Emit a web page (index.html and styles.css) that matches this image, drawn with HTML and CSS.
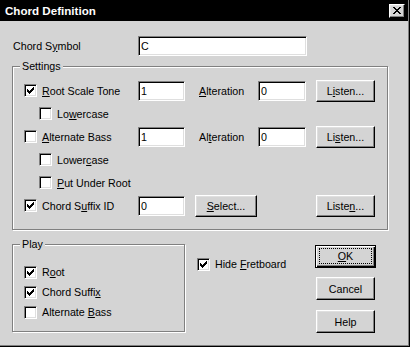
FILE: index.html
```html
<!DOCTYPE html>
<html>
<head>
<meta charset="utf-8">
<link rel="stylesheet" href="styles.css">
</head>
<body>
<div class="window">
  <div class="titlebar">
    <span class="title">Chord Definition</span>
    <span class="close"><svg width="8" height="7" viewBox="0 0 8 7" shape-rendering="crispEdges"><path d="M0 0h2v1H0zM6 0h2v1H6zM1 1h2v1H1zM5 1h2v1H5zM2 2h4v1H2zM3 3h2v1H3zM2 4h4v1H2zM1 5h2v1H1zM5 5h2v1H5zM0 6h2v1H0zM6 6h2v1H6z"/></svg></span>
  </div>
  <div class="content">
    <div class="symbol-row">
      <span class="sym-lbl">Chord S<u>y</u>mbol</span>
      <span class="edit wide">C</span>
    </div>

    <div class="group settings">
      <span class="legend">Settings</span>
      <div class="grid">
        <label class="cb"><span class="box"><svg class="ck" width="11" height="11" viewBox="1 1 11 11" shape-rendering="crispEdges"><path d="M3 5h1v3H3zM4 6h1v3H4zM5 7h1v3H5zM6 6h1v3H6zM7 5h1v3H7zM8 4h1v3H8zM9 3h1v3H9z"/></svg></span><span><u>R</u>oot Scale Tone</span></label>
        <span class="edit">1</span>
        <span class="alt"><u>A</u>lteration</span>
        <span class="edit">0</span>
        <span class="btn listen">L<u>i</u>sten...</span>

        <label class="cb sub"><span class="box"></span><span>Lo<u>w</u>ercase</span></label>

        <label class="cb"><span class="box"></span><span><u>A</u>lternate Bass</span></label>
        <span class="edit">1</span>
        <span class="alt">Al<u>t</u>eration</span>
        <span class="edit">0</span>
        <span class="btn listen">Li<u>s</u>ten...</span>

        <label class="cb sub"><span class="box"></span><span>Lower<u>c</u>ase</span></label>

        <label class="cb sub"><span class="box"></span><span><u>P</u>ut Under Root</span></label>

        <label class="cb"><span class="box"><svg class="ck" width="11" height="11" viewBox="1 1 11 11" shape-rendering="crispEdges"><path d="M3 5h1v3H3zM4 6h1v3H4zM5 7h1v3H5zM6 6h1v3H6zM7 5h1v3H7zM8 4h1v3H8zM9 3h1v3H9z"/></svg></span><span>Chord S<u>u</u>ffix ID</span></label>
        <span class="edit">0</span>
        <span class="btn select"><u>S</u>elect...</span>
        <span class="btn listen c5">Liste<u>n</u>...</span>
      </div>
    </div>

    <div class="bottom">
      <div class="group play">
        <span class="legend">Play</span>
        <label class="cb prow"><span class="box"><svg class="ck" width="11" height="11" viewBox="1 1 11 11" shape-rendering="crispEdges"><path d="M3 5h1v3H3zM4 6h1v3H4zM5 7h1v3H5zM6 6h1v3H6zM7 5h1v3H7zM8 4h1v3H8zM9 3h1v3H9z"/></svg></span><span>R<u>o</u>ot</span></label>
        <label class="cb prow"><span class="box"><svg class="ck" width="11" height="11" viewBox="1 1 11 11" shape-rendering="crispEdges"><path d="M3 5h1v3H3zM4 6h1v3H4zM5 7h1v3H5zM6 6h1v3H6zM7 5h1v3H7zM8 4h1v3H8zM9 3h1v3H9z"/></svg></span><span>Chord Suffi<u>x</u></span></label>
        <label class="cb prow"><span class="box"></span><span>Alternate <u>B</u>ass</span></label>
      </div>
      <div class="mid">
        <label class="cb prow"><span class="box"><svg class="ck" width="11" height="11" viewBox="1 1 11 11" shape-rendering="crispEdges"><path d="M3 5h1v3H3zM4 6h1v3H4zM5 7h1v3H5zM6 6h1v3H6zM7 5h1v3H7zM8 4h1v3H8zM9 3h1v3H9z"/></svg></span><span>Hide <u>F</u>retboard</span></label>
      </div>
      <div class="buttons">
        <span class="btn default"><span class="focus"><u>O</u>K</span></span>
        <span class="btn dlg cancel">Cancel</span>
        <span class="btn dlg help">Help</span>
      </div>
    </div>
  </div>
</div>
</body>
</html>
```

FILE: styles.css
```css
* { box-sizing: border-box; }
html, body { margin: 0; padding: 0; }
body {
  background: #d4d4d4;
  font-family: "Liberation Sans", Arial, sans-serif;
  font-size: 10.7px;
  color: #000;
}
u { text-underline-offset: 1px; }

.window {
  width: 410px;
  height: 347px;
  background: #d4d4d4;
  border-right: 1px solid #000;
  border-bottom: 1px solid #000;
  box-shadow: inset -1px -1px 0 #808080;
  overflow: hidden;
}

.titlebar {
  height: 21px;
  margin-right: 1px;
  background: #000;
  display: flex;
  align-items: center;
  justify-content: space-between;
  padding: 0 3px 0 5px;
}
.title {
  color: #fff;
  font-weight: bold;
  font-size: 11.6px;
}
.close {
  width: 16px;
  height: 14px;
  background: #d4d4d4;
  border: 1px solid;
  border-color: #fff #000 #000 #fff;
  box-shadow: inset -1px -1px 0 #808080, inset 1px 1px 0 #dfdfdf;
  display: flex;
  align-items: center;
  justify-content: center;
}

.content { padding: 15px 0 0 12px; }

.symbol-row { display: flex; align-items: center; height: 20px; }
.sym-lbl { width: 126px; padding-left: 1px; }

.edit {
  height: 20px;
  background: #fff;
  border: 1px solid;
  border-color: #808080 #fff #fff #808080;
  box-shadow: inset 1px 1px 0 #000, inset -1px -1px 0 #dfdfdf;
  padding-left: 2px;
  display: flex;
  align-items: center;
}
.edit.wide { width: 169px; }

.group {
  position: relative;
  border: 1px solid #808080;
  box-shadow: inset 1px 1px 0 #fff, 1px 1px 0 #fff;
}
.legend {
  position: absolute;
  top: -7px;
  left: 7px;
  padding: 0 2px;
  line-height: 13px;
  background: #d4d4d4;
}

.settings {
  margin-top: 10px;
  width: 376px;
  height: 164px;
  padding: 12px 0 0 11px;
}
.grid {
  display: grid;
  grid-template-columns: 114px 47px 73px 48px 69px;
  grid-auto-rows: 23px;
  align-items: center;
}
.sub { grid-column: 1 / -1; padding-left: 15px; }
.c5 { grid-column: 5; }
.alt { padding-left: 14px; }

.cb { display: flex; align-items: center; gap: 5px; }
.box {
  width: 13px;
  height: 13px;
  flex: none;
  background: #fff;
  border: 1px solid;
  border-color: #808080 #fff #fff #808080;
  box-shadow: inset 1px 1px 0 #000, inset -1px -1px 0 #dfdfdf;
}
.ck { display: block; }

.btn {
  height: 22px;
  background: #d4d4d4;
  border: 1px solid;
  border-color: #fff #000 #000 #fff;
  box-shadow: inset -1px -1px 0 #808080, inset 1px 1px 0 #dfdfdf;
  display: flex;
  align-items: center;
  justify-content: center;
}
.listen { width: 59px; margin-left: 10px; }
.select { width: 62px; margin-left: 10px; }

.bottom {
  display: flex;
  margin-top: 14px;
  width: 364px;
}
.play {
  width: 173px;
  height: 88px;
  padding: 17px 0 0 11px;
}
.prow { height: 20px; }
.mid { margin-left: 12px; padding-top: 10px; }

.buttons {
  margin-left: auto;
  width: 61px;
  padding-top: 1px;
  display: flex;
  flex-direction: column;
  align-items: center;
}
.btn.default {
  width: 61px;
  height: 23px;
  border: 1px solid #000;
  box-shadow: inset 1px 1px 0 #fff, inset -1px -1px 0 #000, inset -2px -2px 0 #808080;
  align-items: stretch;
}
.focus {
  flex: 1;
  margin: 2px 3px 3px 3px;
  border: 1px dotted #000;
  display: flex;
  align-items: center;
  justify-content: center;
}
.btn.dlg { width: 59px; height: 23px; }
.cancel { margin-top: 9px; }
.help { margin-top: 10px; }
```
